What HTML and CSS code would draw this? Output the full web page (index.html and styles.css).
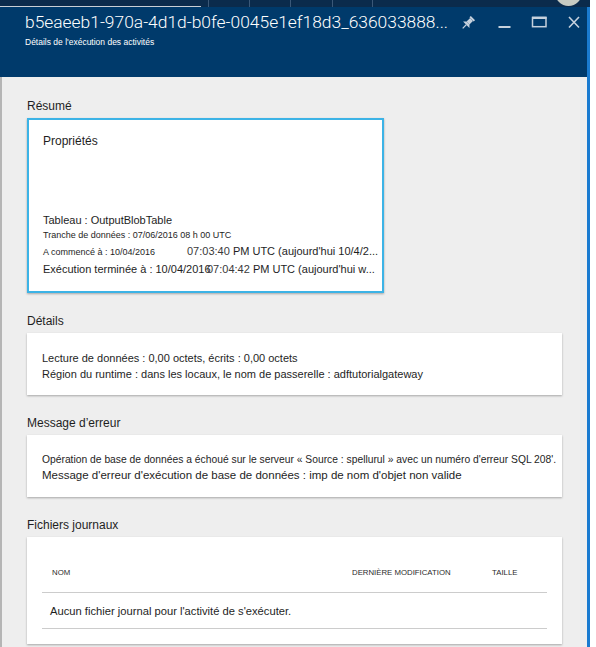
FILE: index.html
```html
<!DOCTYPE html>
<html lang="fr">
<head>
<meta charset="utf-8">
<title>Détails de l'exécution des activités</title>
<link rel="stylesheet" href="styles.css">
</head>
<body>
<div class="page">
  <div class="topbar">
    <div class="tb-seg tb-first"><span class="tb-line"></span></div>
    <div class="tb-seg w41"></div>
    <div class="tb-seg w41"></div>
    <div class="tb-seg w42"></div>
    <div class="tb-seg w40"></div>
    <div class="tb-rest"></div>
    <span class="avatar"></span>
  </div>
  <div class="blade">
    <div class="blade-main">
      <header class="blade-head">
        <div class="titles">
          <h1 class="title">b5eaeeb1-970a-4d1d-b0fe-0045e1ef18d3_636033888...</h1>
          <p class="subtitle">Détails de l'exécution des activités</p>
        </div>
        <div class="actions">
          <svg class="ic ic-pin" width="16" height="16" viewBox="0 0 16 16">
            <g transform="rotate(45 8 8)">
              <rect x="5" y="1" width="6" height="2" />
              <rect x="6" y="3" width="4" height="5" />
              <path d="M6 8 L10 8 L12.5 10.5 L3.5 10.5 Z" />
              <rect x="7.4" y="10.5" width="1.2" height="5" />
            </g>
          </svg>
          <svg class="ic" width="14" height="16" viewBox="0 0 14 16">
            <rect x="1.5" y="11" width="12" height="2" />
          </svg>
          <svg class="ic" width="16" height="16" viewBox="0 0 16 16">
            <rect x="1.5" y="2.5" width="13.5" height="9.2" class="outline" />
            <rect x="1" y="1.7" width="14.5" height="2.3" />
          </svg>
          <svg class="ic" width="12" height="16" viewBox="0 0 12 16">
            <path d="M1 2 L11 12.5 M11 2 L1 12.5" class="stroke" />
          </svg>
        </div>
      </header>
      <main class="content">
        <section class="section">
          <h2 class="label">Résumé</h2>
          <div class="card tile">
            <div class="tile-title">Propriétés</div>
            <div class="props">
              <div class="p-lg">Tableau : OutputBlobTable</div>
              <div class="p-sm">Tranche de données : 07/06/2016 08 h 00 UTC</div>
              <div class="p-row"><span class="p-sm k1">A commencé à : 10/04/2016</span><span class="p-lg"><span class="tm">07:03:40</span> PM UTC (aujourd'hui 10/4/2...</span></div>
              <div class="p-row r2"><span class="p-lg k2">Exécution terminée à : 10/04/2016</span><span class="p-lg"><span class="tm">07:04:42</span> PM UTC (aujourd'hui w...</span></div>
            </div>
          </div>
        </section>

        <section class="section">
          <h2 class="label">Détails</h2>
          <div class="card box details">
            <div class="line">Lecture de données : 0,00 octets, écrits : 0,00 octets</div>
            <div class="line">Région du runtime : dans les locaux, le nom de passerelle : adftutorialgateway</div>
          </div>
        </section>

        <section class="section">
          <h2 class="label">Message d’erreur</h2>
          <div class="card box error">
            <div class="e1">Opération de base de données a échoué sur le serveur « Source : spellurul » avec un numéro d'erreur SQL 208'.</div>
            <div class="e2">Message d'erreur d'exécution de base de données : imp de nom d'objet non valide</div>
          </div>
        </section>

        <section class="section">
          <h2 class="label">Fichiers journaux</h2>
          <div class="card box logs">
            <div class="grid head-row">
              <div class="th">NOM</div>
              <div class="th">DERNIÈRE MODIFICATION</div>
              <div class="th">TAILLE</div>
            </div>
            <div class="grid body-row">
              <div class="td">Aucun fichier journal pour l'activité de s'exécuter.</div>
            </div>
          </div>
        </section>
      </main>
    </div>
    <div class="edge"></div>
  </div>
</div>
</body>
</html>
```

FILE: styles.css
```css
* { box-sizing: border-box; }

html, body {
  margin: 0;
  padding: 0;
  background: #ffffff;
  height: 647px;
  overflow: hidden;
}

body {
  font-family: "Liberation Sans", Arial, sans-serif;
  color: #1e1e1e;
}

.page {
  display: flex;
  flex-direction: column;
  height: 647px;
  width: 590px;
}

/* top application strip */
.topbar {
  position: relative;
  display: flex;
  height: 7px;
  background: #0b2b4c;
  overflow: hidden;
}
.tb-seg {
  height: 7px;
  border-right: 1px solid #3b5878;
}
.tb-first {
  width: 209px;
  display: flex;
  align-items: flex-end;
}
.tb-line {
  display: block;
  width: 201px;
  height: 1px;
  background: #c9ced4;
}
.w41 { width: 41px; }
.w42 { width: 42px; }
.w40 { width: 40px; }
.tb-rest { flex: 1; }
.avatar {
  position: absolute;
  left: 555px;
  top: -21px;
  width: 27px;
  height: 27px;
  border-radius: 50%;
  background: #c7cbc2;
}

/* blade */
.blade {
  flex: 1;
  display: flex;
  min-height: 0;
}
.blade-main {
  width: 587px;
  display: flex;
  flex-direction: column;
}
.edge {
  width: 3px;
  background: #1a7bd0;
}

.blade-head {
  height: 70px;
  background: #003a6b;
  display: flex;
  justify-content: space-between;
  align-items: flex-start;
  padding: 3px 7.5px 0 25px;
  color: #ffffff;
}
.title {
  margin: 0;
  font-family: Roboto, "Liberation Sans", sans-serif;
  font-weight: 300;
  font-size: 17.4px;
  line-height: 24px;
  white-space: nowrap;
}
.subtitle {
  margin: 2px 0 0;
  font-size: 8.5px;
  line-height: 12px;
  white-space: nowrap;
}
.actions {
  display: flex;
  gap: 20.5px;
  margin-top: 5px;
}
.ic { display: block; fill: #c6d1dd; }
.ic .outline { fill: none; stroke: #c6d1dd; stroke-width: 1.5; }
.ic .stroke { fill: none; stroke: #c6d1dd; stroke-width: 1.6; }

/* content */
.content {
  flex: 1;
  background: #eeeeee;
  border-left: 2px solid #b5b5b5;
  padding: 21px 25px 0 25px;
  overflow: hidden;
}
.section + .section { margin-top: 20px; }
.label {
  margin: 0 0 4px;
  font-size: 12px;
  line-height: 16px;
  font-weight: normal;
  color: #1e1e1e;
}
.card {
  background: #ffffff;
  box-shadow: 0 1px 2px rgba(0, 0, 0, 0.3);
}

.tile {
  width: 357px;
  height: 175px;
  border: 2px solid #3cb3e6;
  padding: 13px 14px 14px 14px;
  display: flex;
  flex-direction: column;
}
.tile-title { font-size: 12px; line-height: 16px; }
.props { margin-top: auto; }
.p-lg { font-size: 11px; line-height: 16px; white-space: nowrap; }
.p-sm { font-size: 9px; line-height: 15px; white-space: nowrap; }
.p-row { display: flex; align-items: baseline; line-height: 16px; }
.p-row .p-sm { line-height: 16px; }
.r2 { margin-top: 1px; }
.k1 { flex: none; width: 144px; }
.k2 { flex: none; width: 164px; }
.tm { color: #3a3a3a; }

.box { padding: 17px 15px 13px; }
.line { font-size: 11px; line-height: 16px; white-space: nowrap; }

.error { padding: 18px 15px 14px; overflow: hidden; }
.e1 { font-size: 10.3px; line-height: 14px; white-space: nowrap; }
.e2 { font-size: 11.5px; line-height: 16px; white-space: nowrap; }

.logs { padding: 20px 15px 15px; }
.grid {
  display: grid;
  grid-template-columns: 300px 140px 1fr;
  border-bottom: 1px solid #cccccc;
}
.head-row { padding: 11px 0 14px; }
.th {
  padding-left: 10px;
  font-size: 7.8px;
  line-height: 10px;
  color: #2a2a2a;
  white-space: nowrap;
}
.body-row { padding: 10px 0 9px; }
.td {
  grid-column: 1 / -1;
  padding-left: 8px;
  font-size: 11.2px;
  line-height: 16px;
}
```
